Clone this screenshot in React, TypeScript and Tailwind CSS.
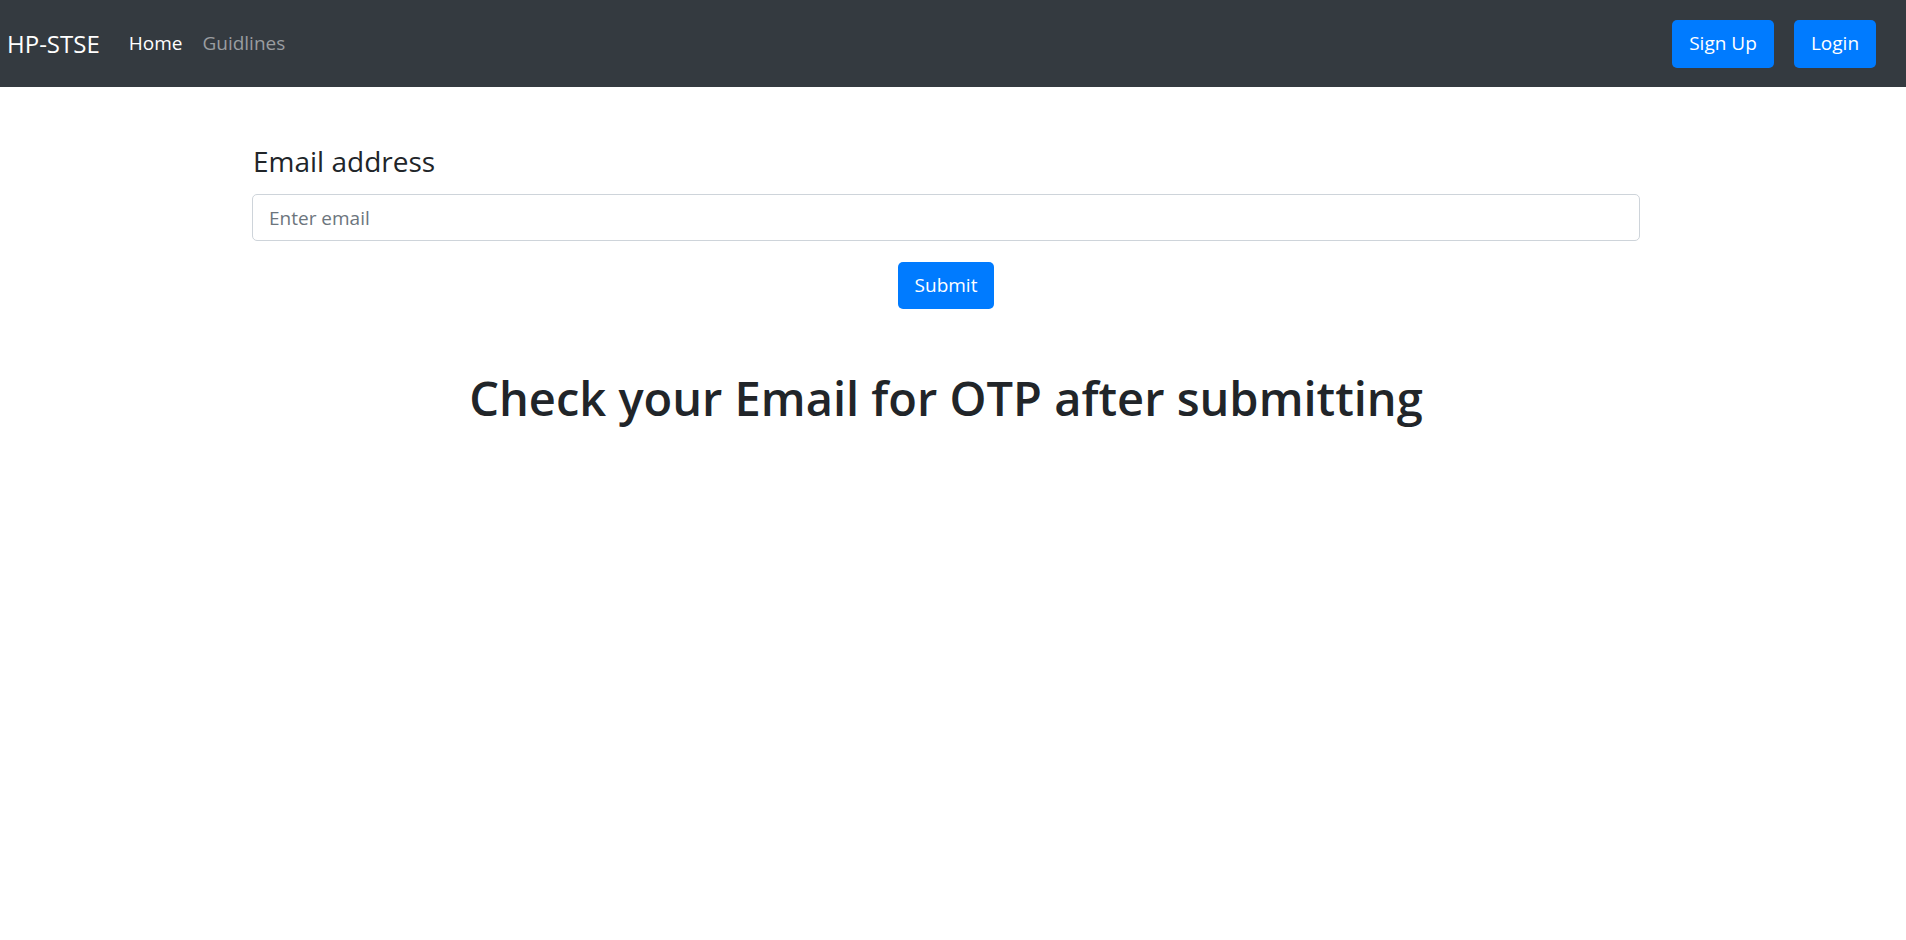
export default function App() {
  return (
    <div className="min-h-screen w-full bg-white font-['Segoe_UI','Open_Sans',sans-serif] text-[#212529]">
      <nav className="flex h-[87px] w-full items-center justify-between bg-[#343a40] pl-[7px] pr-[30px]">
        <div className="flex items-center">
          <a href="#" className="text-[24px] leading-none text-white">
            HP-STSE
          </a>
          <div className="ml-[29px] flex items-center gap-[20px] text-[19px]">
            <a href="#" className="text-white">
              Home
            </a>
            <a href="#" className="text-[#9a9da0]">
              Guidlines
            </a>
          </div>
        </div>
        <div className="flex items-center gap-[20px]">
          <button className="h-[48px] w-[102px] rounded-[5px] bg-[#007bff] text-[19px] text-white">
            Sign Up
          </button>
          <button className="h-[48px] w-[82px] rounded-[5px] bg-[#007bff] text-[19px] text-white">
            Login
          </button>
        </div>
      </nav>

      <div className="ml-[252px] w-[1388px] pt-[56px]">
        <label className="block pl-px text-[28px] leading-[36px] text-[#212529]">
          Email address
        </label>
        <input
          type="email"
          placeholder="Enter email"
          className="mt-[15px] block h-[47px] w-full rounded-[5px] border border-[#ced4da] px-[16px] text-[19px] text-[#495057] placeholder:text-[#6c757d] outline-none"
        />
        <div className="mt-[21px] flex justify-center">
          <button className="h-[47px] w-[96px] rounded-[5px] bg-[#007bff] text-[19px] text-white">
            Submit
          </button>
        </div>
        <h1 className="mt-[62px] text-center text-[47px] font-semibold leading-[55px] text-[#212529]">
          Check your Email for OTP after submitting
        </h1>
      </div>
    </div>
  );
}
